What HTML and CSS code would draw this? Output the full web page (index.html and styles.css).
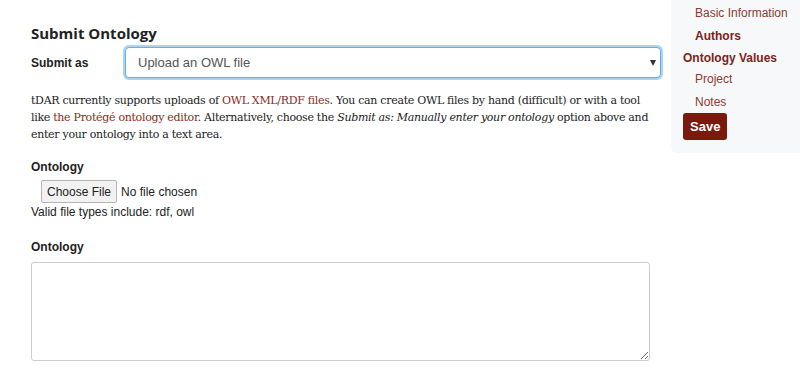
FILE: index.html
```html
<!DOCTYPE html>
<html>
  <head>
    <meta charset="UTF-8">
    <title>Submit Ontology</title>
    <link rel="stylesheet" href="styles.css">
  </head>
  <body>
    <div class="page">
      <div class="main">
        <h2 class="section-title">Submit Ontology</h2>
        <div class="form-row">
          <label for="submit-as" class="form-label row-label">Submit as</label>
          <div class="select-wrap">
            <select id="submit-as" class="form-select">
              <option>Upload an OWL file</option>
              <option>Manually enter your ontology</option>
            </select>
          </div>
        </div>
        <p class="help-text">tDAR currently supports uploads of <a href="#">OWL XML/RDF files</a>. You can create OWL files by hand (difficult) or with a tool like <a href="#">the Protégé ontology editor</a>. Alternatively, choose the <em>Submit as: Manually enter your ontology</em> option above and enter your ontology into a text area.</p>

        <label class="form-label block-label">Ontology</label>
        <div class="file-field">
          <input type="file" class="file-input">
        </div>
        <div class="file-hint">Valid file types include: rdf, owl</div>

        <label for="ontology-text" class="form-label block-label second">Ontology</label>
        <textarea id="ontology-text" class="form-textarea"></textarea>
      </div>

      <div class="sidebar">
        <ul class="nav">
          <li class="sub"><a href="#">Basic Information</a></li>
          <li class="sub strong"><a href="#">Authors</a></li>
          <li class="top"><a href="#">Ontology Values</a></li>
          <li class="sub"><a href="#">Project</a></li>
          <li class="sub"><a href="#">Notes</a></li>
        </ul>
        <button type="button" class="save-button">Save</button>
      </div>
    </div>
  </body>
</html>
```

FILE: styles.css
```css
body {
    margin: 0;
    font-family: Arial, "Liberation Sans", sans-serif;
    background-color: #fff;
    color: #222;
}

a {
    color: #8b2a1c;
    text-decoration: none;
}

.page {
    display: flex;
    align-items: flex-start;
}

.main {
    width: 630px;
    padding-left: 31px;
}

.section-title {
    font-family: "Open Sans", sans-serif;
    font-size: 15px;
    font-weight: bold;
    color: #222;
    margin: 22px 0 3px 0;
    line-height: 22px;
}

.form-row {
    display: flex;
    align-items: center;
}

.form-label {
    font-weight: bold;
    font-size: 12px;
    color: #222;
}

.row-label {
    width: 94px;
}

.select-wrap {
    position: relative;
    flex: 1;
}

.select-wrap::after {
    content: "";
    position: absolute;
    right: 5px;
    top: 13px;
    border-left: 3.5px solid transparent;
    border-right: 3.5px solid transparent;
    border-top: 6px solid #333;
}

.form-select {
    -webkit-appearance: none;
    appearance: none;
    width: 100%;
    height: 31px;
    box-sizing: border-box;
    border: 1px solid #66afe9;
    border-radius: 4px;
    box-shadow: 0 0 0 2px rgba(102, 175, 233, 0.55);
    background-color: #fff;
    padding: 0 12px;
    font-family: Arial, "Liberation Sans", sans-serif;
    font-size: 13px;
    color: #555;
    outline: none;
}

.help-text {
    font-family: "DejaVu Serif", serif;
    font-size: 11px;
    line-height: 17px;
    color: #222;
    margin: 14px 0 17px 0;
    letter-spacing: -0.3px;
}

.help-text em {
    font-style: italic;
}

.block-label {
    display: block;
    line-height: 14px;
}

.block-label.second {
    margin-top: 21px;
    margin-bottom: 8px;
}

.file-field {
    padding-left: 10px;
    margin-top: 6px;
}

.file-input {
    font-family: Arial, "Liberation Sans", sans-serif;
    font-size: 12px;
    color: #222;
}

.file-input::file-selector-button {
    font-family: Arial, "Liberation Sans", sans-serif;
    font-size: 12px;
    color: #222;
    background-color: #f2f2f2;
    border: 1px solid #b5b5b5;
    border-radius: 2px;
    padding: 3px 5px;
    margin-right: 4px;
    height: 23px;
}

.file-hint {
    font-size: 12px;
    color: #222;
    margin-top: 2px;
    line-height: 14px;
}

.form-textarea {
    display: block;
    width: 619px;
    height: 99px;
    box-sizing: border-box;
    border: 1px solid #ccc;
    border-radius: 3px;
    margin: 0;
}

.sidebar {
    margin-left: auto;
    width: 129px;
    height: 153px;
    box-sizing: border-box;
    background-color: #f7f8fa;
    border-bottom-left-radius: 6px;
    padding: 5px 0 0 12px;
}

.nav {
    list-style: none;
    margin: 0;
    padding: 0;
}

.nav li {
    font-size: 12px;
    line-height: 16px;
}

.nav .sub {
    padding-left: 12px;
    margin-bottom: 7px;
}

.nav .sub a {
    color: #8b3a2e;
}

.nav .strong a,
.nav .top a {
    font-weight: bold;
    color: #7c2418;
}

.nav .strong {
    margin-bottom: 6px;
}

.nav .top {
    margin-bottom: 5px;
}

.nav li:last-child {
    margin-bottom: 3px;
}

.save-button {
    background-color: #7a1a0e;
    color: #fff;
    font-family: Arial, "Liberation Sans", sans-serif;
    font-size: 13px;
    font-weight: bold;
    border: none;
    border-radius: 3px;
    padding: 0 7px;
    height: 27px;
    cursor: pointer;
}
```
